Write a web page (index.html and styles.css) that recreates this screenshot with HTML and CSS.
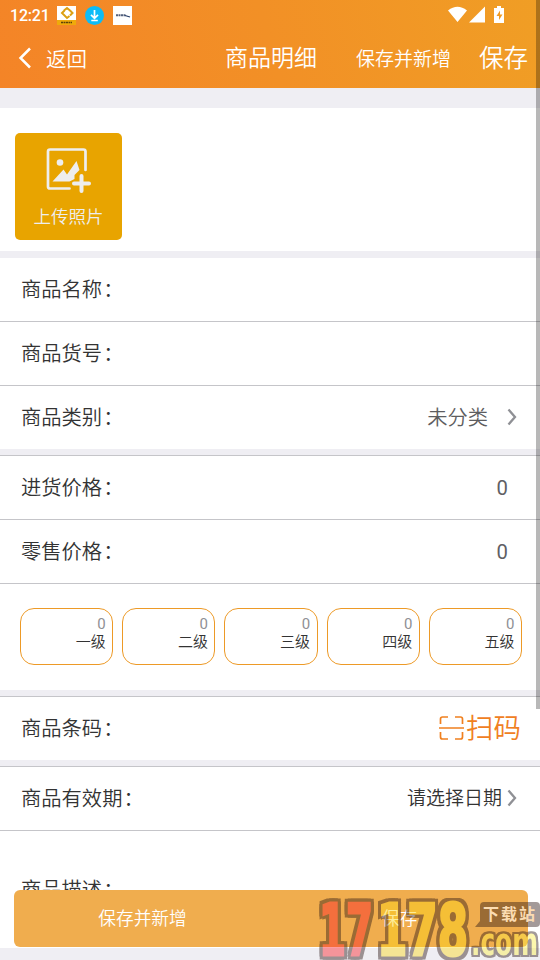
FILE: index.html
```html
<!DOCTYPE html>
<html lang="zh-CN">
<head>
<meta charset="utf-8">
<title>商品明细</title>
<link rel="stylesheet" href="styles.css">
</head>
<body>
<div class="screen">
  <header class="header">
    <div class="status">
      <span class="clock">12:21</span>
      <svg class="app-icon" width="19" height="19" viewBox="0 0 19 19"><path fill="#fff" d="M0 0h19v19H0z"/><path fill="#efaa0b" d="M0 14h19v5H0z"/><path d="M7 4.500 10 2l3 2.500M13 4.500 15.500 7 13 9.500M12.500 10 10 12 5 7l2.500-2.500" fill="none" stroke="#dca013" stroke-width="2"/><path d="M4 16.500h11" stroke="#5c4208" stroke-width="1.500" stroke-dasharray="2 .5"/></svg>
      <svg class="app-icon" width="19" height="19" viewBox="0 0 19 19"><circle cx="9.500" cy="9.500" r="9.500" fill="#0cbcf7"/><path d="M9.500 4v8M6 8.800l3.500 3.500L13 8.800M6.300 14.500h6.500" fill="none" stroke="#fff" stroke-width="1.700"/></svg>
      <svg class="app-icon" width="19" height="19" viewBox="0 0 19 19"><path fill="#fff" d="M0 0h19v19H0z"/><path d="M3 9.200h10" stroke="#53617d" stroke-width="2" stroke-dasharray="2 .5"/><path d="M12 9.500l5 1.500" stroke="#263c67" stroke-width="1.300"/></svg>
      <svg class="signals" width="58" height="18" viewBox="0 0 58 18"><path fill="#fff" d="M0 4.500Q9.500-3 19 4.500L9.500 16zM21 16.500 37 .5v16zM46 2h3V0h4v2h3v15H46z"/><path d="M52 4.500 48.500 10H51v4l3.500-5.500H52z" fill="#f09b25"/></svg>
    </div>
    <nav class="nav">
      <svg class="back-icon" width="14" height="22" viewBox="0 0 14 22"><path d="M12 1.500 2.500 11 12 20.500" fill="none" stroke="#fff" stroke-width="2.500"/></svg>
      <span class="back">返回</span>
      <h1 class="title">商品明细</h1>
      <span class="save-new">保存并新增</span>
      <span class="save">保存</span>
    </nav>
  </header>

  <section class="photo">
    <div class="upload">
      <svg width="48" height="48" viewBox="0 0 48 48"><path d="M40.500 23V4.500q0-2-2-2H5q-2 0-2 2v35q0 2 2 2h19.500" fill="none" stroke="#eee" stroke-width="2.700" stroke-linecap="round"/><circle cx="15" cy="15.500" r="3.300" fill="#eee"/><path d="M7.500 34.500 18.500 22.500l3.500 5L31.500 14l3 9-5 5v4l-5 2.500z" fill="#eee"/><path d="M36.500 29v15M29 36.500h15" stroke="#eee" stroke-width="4" stroke-linecap="round"/></svg>
      <span class="upload-text">上传照片</span>
    </div>
  </section>

  <section class="group first">
    <div class="row"><span>商品名称<span class="colon">：</span></span></div>
    <div class="row line"><span>商品货号<span class="colon">：</span></span></div>
    <div class="row line"><span>商品类别<span class="colon">：</span></span><span class="value category">未分类</span><svg class="arrow" width="10" height="18" viewBox="0 0 10 18"><path d="m1.500 1.500 6.500 7.500-6.500 7.500" fill="none" stroke="#8f9095" stroke-width="2.300"/></svg></div>
  </section>

  <section class="group">
    <div class="row line"><span>进货价格<span class="colon">：</span></span><span class="value number">0</span></div>
    <div class="row line"><span>零售价格<span class="colon">：</span></span><span class="value number">0</span></div>
    <div class="levels line">
      <div class="level"><span class="price">0</span><span>一级</span></div>
      <div class="level"><span class="price">0</span><span>二级</span></div>
      <div class="level"><span class="price">0</span><span>三级</span></div>
      <div class="level"><span class="price">0</span><span>四级</span></div>
      <div class="level"><span class="price">0</span><span>五级</span></div>
    </div>
  </section>

  <section class="group">
    <div class="row line"><span>商品条码<span class="colon">：</span></span><span class="scan"><svg width="25" height="26" viewBox="0 0 25 26"><path d="M1.500 9V4q0-2 2-2H9M16 2h5.500q2 0 2 2v5M1.500 17v5q0 2 2 2H9M16 24h5.500q2 0 2-2v-5M0 13h25" fill="none" stroke="#f0801f" stroke-width="1.700"/></svg>扫码</span></div>
  </section>

  <section class="group last">
    <div class="row line"><span>商品有效期<span class="colon">：</span></span><span class="value date">请选择日期</span><svg class="arrow" width="10" height="18" viewBox="0 0 10 18"><path d="m1.500 1.500 6.500 7.500-6.500 7.500" fill="none" stroke="#8f9095" stroke-width="2.300"/></svg></div>
    <div class="description line"><span>商品描述<span class="colon">：</span></span></div>
  </section>

  <div class="actions"><span>保存并新增</span><span>保存</span></div>

  <svg class="watermark" width="226" height="62" viewBox="0 0 226 62">
    <g opacity=".43">
      <path fill="#2b1714" d="M170 4h52q4 0 4 4v17q0 4-4 4h-61l5-6V8q0-4 4-4z"/>
      <text class="digits red" x="5" y="57" textLength="54" lengthAdjust="spacingAndGlyphs">17</text>
      <text class="digits yellow" x="63" y="57" textLength="91" lengthAdjust="spacingAndGlyphs">178</text>
      <text class="domain" x="157" y="57" textLength="67" lengthAdjust="spacingAndGlyphs">.com</text>
    </g>
    <text class="site" x="169" y="22" textLength="52">下载站</text>
  </svg>
  <div class="scrollbar"></div>
</div>
</body>
</html>
```
FILE: styles.css
```css
* { box-sizing: border-box; }
body {
  margin: 0;
  font-family: Roboto, "Noto Sans CJK SC", sans-serif;
  font-weight: 350;
  color: #333;
}
.screen {
  position: relative;
  width: 540px;
  height: 960px;
  overflow: hidden;
  background: #efeef3;
}
.header {
  height: 88px;
  color: #fff;
  background: linear-gradient(75deg, #f48427 0%, #f29026 50%, #f09e25 100%);
}
.status {
  display: flex;
  align-items: center;
  height: 31px;
  padding: 0 34px 0 10px;
}
.clock { width: 47px; font-size: 16px; font-weight: 500; letter-spacing: -.2px; }
.app-icon { margin-right: 9px; }
.signals { margin-left: auto; margin-top: -2px; }
.nav {
  display: flex;
  align-items: center;
  height: 57px;
  padding: 0 12px 3px 18px;
  white-space: nowrap;
}
.back { margin-left: 14px; font-size: 20.500px; }
.title { margin: -4px 0 0 138px; font-size: 23px; font-weight: 350; }
.save-new { margin-left: auto; margin-top: -1px; font-size: 19px; }
.save { margin-left: 28px; margin-top: -4px; font-size: 24.500px; }
.photo {
  height: 143px;
  margin-top: 20px;
  padding: 25px 15px;
  background: #fff;
}
.upload {
  display: flex;
  flex-direction: column;
  align-items: center;
  width: 107px;
  height: 107px;
  padding-top: 14px;
  border-radius: 5px;
  background: #e8a400;
  color: #eee;
}
.upload-text { margin-top: 9px; font-size: 17.500px; line-height: 26px; }
.group { margin-top: 6px; background: #fff; }
.first { margin-top: 7px; }
.line { border-top: 1px solid #c5c5c9; }
.row {
  display: flex;
  align-items: center;
  height: 64px;
  padding: 0 23px 0 21px;
  font-size: 20.300px;
  line-height: 30px;
}
.colon { padding-left: 1px; }
.first .row:first-child { height: 63px; }
.arrow { margin-top: -1px; }
.value { margin-left: auto; }
.category { margin-right: 19px; color: #5d5d60; }
.number { margin-right: 9px; font-weight: 400; color: #606064; }
.date { margin-right: 5px; font-size: 19px; }
.scan {
  display: flex;
  align-items: center;
  gap: 2px;
  margin-left: auto;
  margin-right: -4px;
  font-size: 27.500px;
  color: #f0801f;
}
.scan svg { margin-top: -2px; }
.levels {
  display: flex;
  gap: 9px;
  height: 107px;
  padding: 24px 18px 25px 20px;
}
.level {
  display: flex;
  flex: 1;
  flex-direction: column;
  align-items: flex-end;
  padding: 6px 6.500px 0 0;
  border: 1px solid #ed9a27;
  border-radius: 14px;
  font-size: 15px;
  line-height: 18px;
}
.price { font-weight: 400; color: #8f9095; }
.description {
  height: 118px;
  padding: 44px 21px 0;
  font-size: 20.300px;
  line-height: 30px;
}
.actions {
  position: absolute;
  left: 14px;
  top: 890px;
  display: flex;
  align-items: center;
  width: 514px;
  height: 57px;
  padding-bottom: 4px;
  border-radius: 6px;
  background: #f0ad4e;
  color: #fff;
  font-size: 17.700px;
}
.actions span { flex: 1; text-align: center; }
.watermark { position: absolute; left: 314px; top: 898px; }
.digits {
  font: bold 71px "DejaVu Sans", sans-serif;
  stroke-width: 3px;
  filter: drop-shadow(3px 0 0 #2b1714) drop-shadow(-3px 0 0 #2b1714) drop-shadow(0 3px 0 #2b1714) drop-shadow(0 -3px 0 #2b1714);
}
.red { fill: #fb2028; stroke: #fb2028; }
.yellow { fill: #fcd718; stroke: #fcd718; }
.domain {
  font: bold 38px "DejaVu Sans", sans-serif;
  fill: #fcee45;
  filter: drop-shadow(2px 0 0 #2b1714) drop-shadow(-2px 0 0 #2b1714) drop-shadow(0 2px 0 #2b1714) drop-shadow(0 -2px 0 #2b1714);
}
.site { font: bold 16px "Noto Sans CJK SC", sans-serif; fill: #fbdcb2; }
.scrollbar {
  position: absolute;
  right: 0;
  top: 0;
  width: 4px;
  height: 709px;
  background: rgba(0, 0, 0, .28);
}
```
